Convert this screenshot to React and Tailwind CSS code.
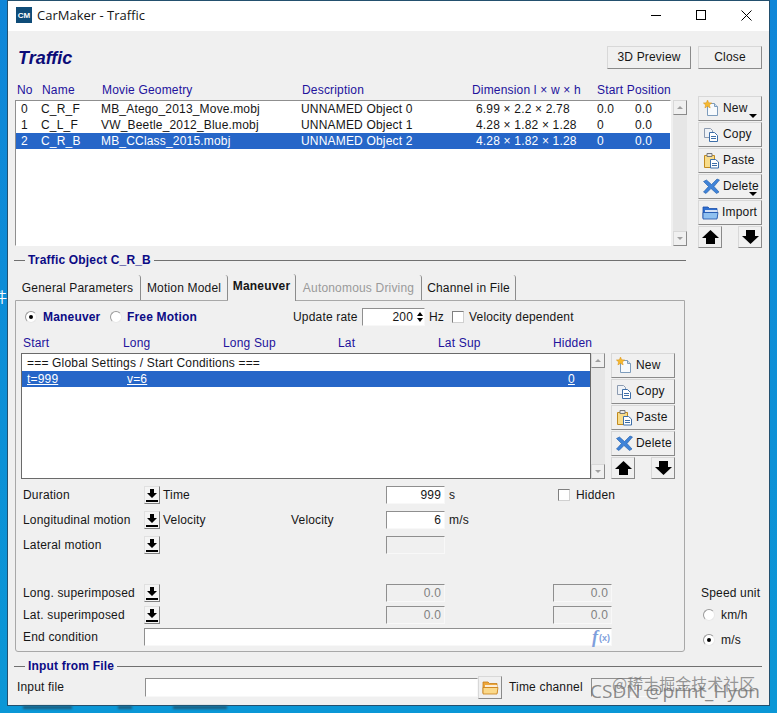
const raised = "border border-t-[#d8d8d8] border-l-[#d8d8d8] border-r-[#8a8a8a] border-b-[#8a8a8a] bg-[#f0f0f0]";
const sunken = "border border-t-[#8f8f8f] border-l-[#8f8f8f] border-r-[#f8f8f8] border-b-[#f8f8f8]";

const traffic = [
  ["0", "C_R_F", "MB_Atego_2013_Move.mobj", "UNNAMED Object 0", "6.99 × 2.2 × 2.78", "0.0", "0.0"],
  ["1", "C_L_F", "VW_Beetle_2012_Blue.mobj", "UNNAMED Object 1", "4.28 × 1.82 × 1.28", "0", "0.0"],
  ["2", "C_R_B", "MB_CClass_2015.mobj", "UNNAMED Object 2", "4.28 × 1.82 × 1.28", "0", "0.0"],
];

function IconNew() {
  return (
    <svg width="17" height="17" viewBox="0 0 17 17" className="shrink-0">
      <path d="M4.5 3.5h7l3 3v9h-10z" fill="#f7fafd" stroke="#7d9cbc" />
      <path d="M11.5 3.5v3h3" fill="#cfe0f0" stroke="#7d9cbc" />
      <path d="M4.5 0l1.2 2.8 3 .2-2.3 1.9.8 3-2.7-1.6-2.6 1.6.7-3L.4 3l3-.2z" fill="#f5b92e" stroke="#d98e14" strokeWidth=".5" />
    </svg>
  );
}

function IconCopy() {
  return (
    <svg width="17" height="17" viewBox="0 0 17 17" className="shrink-0">
      <path d="M1.5 2.5h6l2 2v7h-8z" fill="#eef2f7" stroke="#8c9bb0" />
      <path d="M6.5 6.5h5l3 3v6h-8z" fill="#fff" stroke="#3d6ea8" />
      <path d="M8 10.5h5M8 12.5h5" stroke="#3d6ea8" />
    </svg>
  );
}

function IconPaste() {
  return (
    <svg width="17" height="17" viewBox="0 0 17 17" className="shrink-0">
      <path d="M1.5 3.5h10v12h-10z" fill="#f8dc8a" stroke="#c08a20" />
      <path d="M4 1.5h5v3H4z" fill="#e8e8e8" stroke="#777" />
      <path d="M7.5 7.5h5l3 2.5v6h-8z" fill="#fff" stroke="#3d6ea8" />
      <path d="M9 11.5h5M9 13.5h5" stroke="#3d6ea8" />
    </svg>
  );
}

function IconDelete() {
  return (
    <svg width="17" height="17" viewBox="0 0 17 17" className="shrink-0">
      <path d="M.5 3.500l3-1.500L8.500 6.500 14 1l2.500 1L11 8.500l5 5.500-2.500 1.500L8 10.500 3 15.500.5 14 5.500 8.500z" fill="#3f83d8" stroke="#1f5aa8" strokeWidth=".6" />
    </svg>
  );
}

function IconFolder({ tone = "blue" }) {
  const c = tone === "blue" ? ["#2f6fd0", "#8fc0f0", "#1d4fa8"] : ["#eda63a", "#fbd98a", "#c67d16"];
  return (
    <svg width="17" height="17" viewBox="0 0 17 17" className="shrink-0">
      <path d="M1 3h5l1.500 1.500H15V14H1z" fill={c[0]} stroke={c[2]} strokeWidth=".8" />
      <path d="M3 6h12v2H3z" fill="#fff" opacity=".8" />
      <path d="M1 8.500h15L15 15H1z" fill={c[1]} stroke={c[2]} strokeWidth=".8" />
    </svg>
  );
}

function ArrowUp() {
  return (
    <svg width="17" height="14" viewBox="0 0 17 14"><path d="M8.500 0L17 8h-4v6H4V8H0z" fill="#000" /></svg>
  );
}

function ArrowDown() {
  return (
    <svg width="17" height="14" viewBox="0 0 17 14"><path d="M4 0h9v6h4l-8.500 8L0 6h4z" fill="#000" /></svg>
  );
}

function Caret() {
  return <span className="absolute right-[4px] bottom-[2px] w-0 h-0 border-l-[4px] border-r-[4px] border-t-[4px] border-l-transparent border-r-transparent border-t-black" />;
}

function ToolButton({ icon, label, caret, pad = "pl-[4px]" }) {
  return (
    <div className={`relative flex items-center gap-[3px] w-[64px] h-[25px] mb-[1px] ${pad} ${raised}`}>
      {icon}
      <span>{label}</span>
      {caret && <Caret />}
    </div>
  );
}

function ToolStack({ showCarets, showImport }) {
  return (
    <div className="w-[64px]">
      <ToolButton icon={<IconNew />} label="New" caret={showCarets} />
      <ToolButton icon={<IconCopy />} label="Copy" />
      <ToolButton icon={<IconPaste />} label="Paste" />
      <ToolButton icon={<IconDelete />} label="Delete" caret={showCarets} />
      {showImport && <ToolButton icon={<IconFolder />} label="Import" pad="pl-[3px]" />}
      <div className="flex justify-between">
        <div className={`w-[24px] h-[22px] flex items-center justify-center ${raised}`}><ArrowUp /></div>
        <div className={`w-[24px] h-[22px] flex items-center justify-center ${raised}`}><ArrowDown /></div>
      </div>
    </div>
  );
}

function Scrollbar({ height }) {
  return (
    <div className={`flex flex-col justify-between w-[14px] bg-[#e6e6e6] bg-[radial-gradient(#cfcfcf_0.5px,transparent_0.6px)] bg-[length:2px_2px] ${height}`}>
      <div className={`h-[15px] flex items-center justify-center ${raised}`}>
        <span className="w-0 h-0 border-l-[3px] border-r-[3px] border-b-[3px] border-l-transparent border-r-transparent border-b-[#a0a0a0]" />
      </div>
      <div className={`h-[15px] flex items-center justify-center ${raised}`}>
        <span className="w-0 h-0 border-l-[3px] border-r-[3px] border-t-[3px] border-l-transparent border-r-transparent border-t-[#a0a0a0]" />
      </div>
    </div>
  );
}

function Legend({ title, width }) {
  return (
    <div className={`flex items-center h-[14px] ${width}`}>
      <div className="w-[11px] h-px bg-[#707070]" />
      <span className="px-[3px] font-bold text-[#0b0b85]">{title}</span>
      <div className="flex-1 h-px bg-[#707070]" />
    </div>
  );
}

function Radio({ checked }) {
  return (
    <span className="flex items-center justify-center w-[12px] h-[12px] rounded-full bg-white border border-t-[#9a9a9a] border-l-[#9a9a9a] border-r-[#e8e8e8] border-b-[#e8e8e8]">
      {checked && <span className="w-[4px] h-[4px] rounded-full bg-black" />}
    </span>
  );
}

function Checkbox() {
  return <span className="block w-[12px] h-[12px] bg-white border border-t-[#808080] border-l-[#808080] border-r-[#d0d0d0] border-b-[#d0d0d0]" />;
}

function DownButton() {
  return (
    <div className="flex items-center justify-center w-[16px] h-[18px] bg-[#f4f4f4] border border-t-[#e0e0e0] border-l-[#e0e0e0] border-r-[#808080] border-b-[#808080]">
      <svg width="12" height="13" viewBox="0 0 12 13">
        <path d="M4 0h4v4h3L6 9 1 4h3zM0 11h12v2H0z" fill="#000" />
      </svg>
    </div>
  );
}

function Field({ value, disabled, width = "w-[59px]" }) {
  return (
    <div className={`flex items-center justify-end h-[18px] pr-[3px] ${width} ${sunken} ${disabled ? "text-[#808080]" : "bg-white"}`}>
      {value}
    </div>
  );
}

function FormRow({ label, down, name, name2, field, disabled, unit, far, mt }) {
  return (
    <div className={`flex items-center h-[18px] ${mt}`}>
      <span className="w-[123px] pl-[2px] shrink-0 whitespace-nowrap">{label}</span>
      <span className="w-[16px] shrink-0">{down && <DownButton />}</span>
      <span className="w-[131px] pl-[3px] shrink-0">{name}</span>
      <span className="w-[95px] shrink-0">{name2}</span>
      <span className="w-[59px] shrink-0">
        {(field !== undefined) && <Field value={field} disabled={disabled} />}
      </span>
      <span className="w-[108px] pl-[4px] shrink-0">{unit}</span>
      {far}
    </div>
  );
}

function Tabs() {
  const tabs = [
    { label: "General Parameters", w: "w-[126px]" },
    { label: "Motion Model", w: "w-[87px]" },
    { label: "Maneuver", w: "w-[68px]", active: true },
    { label: "Autonomous Driving", w: "w-[126px]", off: true },
    { label: "Channel in File", w: "w-[94px]" },
  ];
  return (
    <div className="flex items-end h-[27px]">
      {tabs.map((t) => (
        <div
          key={t.label}
          className={`flex justify-center border-r border-[#8c8c8c] rounded-tr-[3px] ${t.w} ${
            t.active
              ? "h-[27px] pt-[5px] font-bold relative top-px bg-[#f0f0f0]"
              : "h-[25px] pt-[6px]"
          } ${t.off ? "text-[#9a9a9a]" : ""}`}
        >
          {t.label}
        </div>
      ))}
    </div>
  );
}

export default function App() {
  return (
    <div className="relative w-[777px] h-[713px] overflow-hidden pl-[8px] pt-px bg-gradient-to-b from-[#0f86d8] to-[#0b97d6] text-[12px] leading-[15px] tracking-[0.18px] text-[#161616] [font-family:'Liberation_Sans',Arial,sans-serif]">
      <div className="w-[761px] h-[704px] bg-[#f0f0f0] shadow-[0_0_0_1px_#23506e]">
        {/* title bar */}
        <div className="flex items-center h-[30px] pb-[2px] pl-[8px] bg-white">
          <div className="flex items-center justify-center w-[16px] h-[16px] bg-[#0f4c78] text-white text-[8px] font-bold tracking-normal">CM</div>
          <span className="ml-[5px] text-[13px] tracking-normal [font-family:'Open_Sans',sans-serif]">CarMaker - Traffic</span>
          <div className="ml-auto flex items-center gap-[35px] pr-[17px]">
            <div className="w-[10px] h-px bg-black" />
            <div className="w-[10px] h-[10px] border border-black" />
            <svg width="11" height="11" viewBox="0 0 11 11"><path d="M.5.5l10 10M10.500.5l-10 10" stroke="#000" fill="none" /></svg>
          </div>
        </div>

        {/* heading */}
        <div className="flex items-center pt-[15px] pl-[10px] pr-[7px]">
          <span className="text-[18px] leading-[23px] font-bold italic tracking-normal text-[#0b0b78] relative top-[1px]">Traffic</span>
          <div className={`ml-auto flex items-center justify-center w-[84px] h-[23px] ${raised}`}>3D Preview</div>
          <div className={`ml-[7px] flex items-center justify-center w-[64px] h-[23px] ${raised}`}>Close</div>
        </div>

        {/* traffic list */}
        <div className="flex pl-[7px] pr-[7px] mt-[12px]">
          <div className="w-[656px]">
            <div className="flex h-[16px] mt-px items-center whitespace-nowrap text-[#22129c]">
              <span className="w-[27px] pl-[2px]">No</span>
              <span className="w-[60px]">Name</span>
              <span className="w-[200px]">Movie Geometry</span>
              <span className="w-[170px]">Description</span>
              <span className="w-[125px]">Dimension l × w × h</span>
              <span>Start Position</span>
            </div>
            <div className="h-[146px] bg-white border border-t-[#8f8f8f] border-l-[#8f8f8f] border-r-white border-b-white mt-[2px]">
              {traffic.map((r) => (
                <div key={r[0]} className={`flex items-center h-[16px] ${r[0] === "2" ? "bg-[#2666c8] text-white" : ""}`}>
                  <span className="w-[25px] pl-[5px]">{r[0]}</span>
                  <span className="w-[60px]">{r[1]}</span>
                  <span className="w-[200px]">{r[2]}</span>
                  <span className="w-[175px]">{r[3]}</span>
                  <span className="w-[121px]">{r[4]}</span>
                  <span className="w-[38px]">{r[5]}</span>
                  <span>{r[6]}</span>
                </div>
              ))}
            </div>
          </div>
          <div className="ml-[2px] mt-[19px]"><Scrollbar height="h-[146px]" /></div>
          <div className="ml-[11px] mt-[15px]"><ToolStack showCarets showImport /></div>
        </div>

        {/* traffic object section */}
        <div className="pl-[6px] mt-[5px]"><Legend title="Traffic Object C_R_B" width="w-[672px]" /></div>

        <div className="flex pl-[7px] mt-[6px]">
          <div className="w-[670px]">
            <Tabs />
            <div className="h-[352px] border border-[#a8a8a8] rounded-b-[3px] pl-[5px]">
              <div className="flex items-center h-[18px] mt-[7px]">
                <span className="ml-[4px]"><Radio checked /></span>
                <span className="ml-[6px] w-[67px] font-bold text-[#0b0b85]">Maneuver</span>
                <Radio />
                <span className="ml-[5px] w-[166px] font-bold text-[#0b0b85]">Free Motion</span>
                <span className="w-[69px]">Update rate</span>
                <div className={`flex items-center justify-end w-[63px] h-[18px] bg-white ${sunken}`}>
                  <span className="mr-[2px]">200</span>
                  <span className="flex flex-col gap-[2px] w-[9px] items-center">
                    <span className="w-0 h-0 border-l-[3px] border-r-[3px] border-b-[4px] border-l-transparent border-r-transparent border-b-black" />
                    <span className="w-0 h-0 border-l-[3px] border-r-[3px] border-t-[4px] border-l-transparent border-r-transparent border-t-black" />
                  </span>
                </div>
                <span className="ml-[4px] w-[23px]">Hz</span>
                <Checkbox />
                <span className="ml-[5px]">Velocity dependent</span>
              </div>

              <div className="flex items-center h-[16px] mt-[9px] pl-[2px] text-[#22129c]">
                <span className="w-[100px]">Start</span>
                <span className="w-[100px]">Long</span>
                <span className="w-[115px]">Long Sup</span>
                <span className="w-[100px]">Lat</span>
                <span className="w-[115px]">Lat Sup</span>
                <span>Hidden</span>
              </div>

              <div className="flex mt-[2px]">
                <div className="w-[570px] h-[126px] bg-white border border-[#6a6a6a] pt-px">
                  <div className="flex items-center h-[16px] pl-[5px]">=== Global Settings / Start Conditions ===</div>
                  <div className="flex items-center h-[16px] pl-[5px] bg-[#2666c8] text-white underline">
                    <span className="w-[100px]">t=999</span>
                    <span className="w-[441px]">v=6</span>
                    <span>0</span>
                  </div>
                </div>
                <Scrollbar height="h-[126px]" />
                <div className="ml-[6px]"><ToolStack /></div>
              </div>

              <FormRow label="Duration" down name="Time" field="999" unit="s" mt="mt-[7px]" far={
                <div className="flex items-center gap-[6px] ml-[5px]"><Checkbox /><span>Hidden</span></div>
              } />
              <FormRow label="Longitudinal motion" down name="Velocity" name2="Velocity" field="6" unit="m/s" mt="mt-[7px]" />
              <FormRow label="Lateral motion" down field="" disabled mt="mt-[7px]" />
              <FormRow label="Long. superimposed" down field="0.0" disabled mt="mt-[30px]" far={<Field value="0.0" disabled />} />
              <FormRow label="Lat. superimposed" down field="0.0" disabled mt="mt-[4px]" far={<Field value="0.0" disabled />} />
              <div className="flex items-center h-[18px] mt-[4px]">
                <span className="w-[123px] pl-[2px] shrink-0">End condition</span>
                <div className={`flex items-center justify-end w-[468px] h-[18px] pr-px bg-white ${sunken} border-l-[#8f8f8f]`}>
                  <span className="font-bold italic text-[18px] tracking-normal text-[#7f9fdc] [font-family:'Liberation_Serif',serif]">f</span>
                  <span className="ml-px mt-[3px] font-bold text-[9px] tracking-normal text-[#7f9fdc]">(x)</span>
                </div>
              </div>
            </div>
          </div>

          <div className="flex flex-col justify-end pb-[4px] pl-[16px] whitespace-nowrap">
            <span className="h-[14px]">Speed unit</span>
            <div className="flex items-center gap-[6px] pl-[2px] h-[16px] mt-[7px]"><Radio /><span>km/h</span></div>
            <div className="flex items-center gap-[6px] pl-[2px] h-[16px] mt-[9px]"><Radio checked /><span>m/s</span></div>
          </div>
        </div>

        {/* input from file */}
        <div className="pl-[6px] mt-[7px]"><Legend title="Input from File" width="w-[748px]" /></div>
        <div className="flex items-center h-[19px] mt-[5px] pl-[9px]">
          <span className="w-[128px]">Input file</span>
          <div className={`w-[333px] h-[19px] bg-white ${sunken} border-l-[#8f8f8f]`} />
          <div className={`flex items-center justify-center w-[24px] h-[23px] ${raised}`}><IconFolder tone="orange" /></div>
          <span className="ml-[7px] w-[82px]">Time channel</span>
          <div className={`w-[60px] h-[19px] ${sunken}`} />
        </div>
      </div>

      {/* blurred desktop text under the window */}
      <div className="flex ml-[15px] mt-px blur-[1px]">
        <div className="w-[49px] h-[3px] bg-[#1c5c7c]" />
        <div className="ml-[46px] w-[14px] h-[3px] bg-[#1c5c7c]" />
        <div className="ml-[41px] w-[54px] h-[3px] bg-[#1c5c7c]" />
      </div>

      {/* desktop label peeking out left of the window */}
      <span className="absolute left-[-7px] top-[289px] text-[14px] text-white tracking-normal [font-family:'Noto_Sans_CJK_SC',sans-serif]">件</span>

      {/* site watermark */}
      <div className="absolute left-[612px] top-[673px] text-[16px] leading-[20px] tracking-normal text-[#6e6e6e]/70 whitespace-nowrap [font-family:'Noto_Sans_CJK_SC',sans-serif]">@稀土掘金技术社区</div>
      <div className="absolute left-[590px] top-[679px] text-[19px] leading-[24px] tracking-normal text-[#6e6e6e]/80 whitespace-nowrap [font-family:'Open_Sans',sans-serif]">CSDN @print_Hyon</div>
    </div>
  );
}
